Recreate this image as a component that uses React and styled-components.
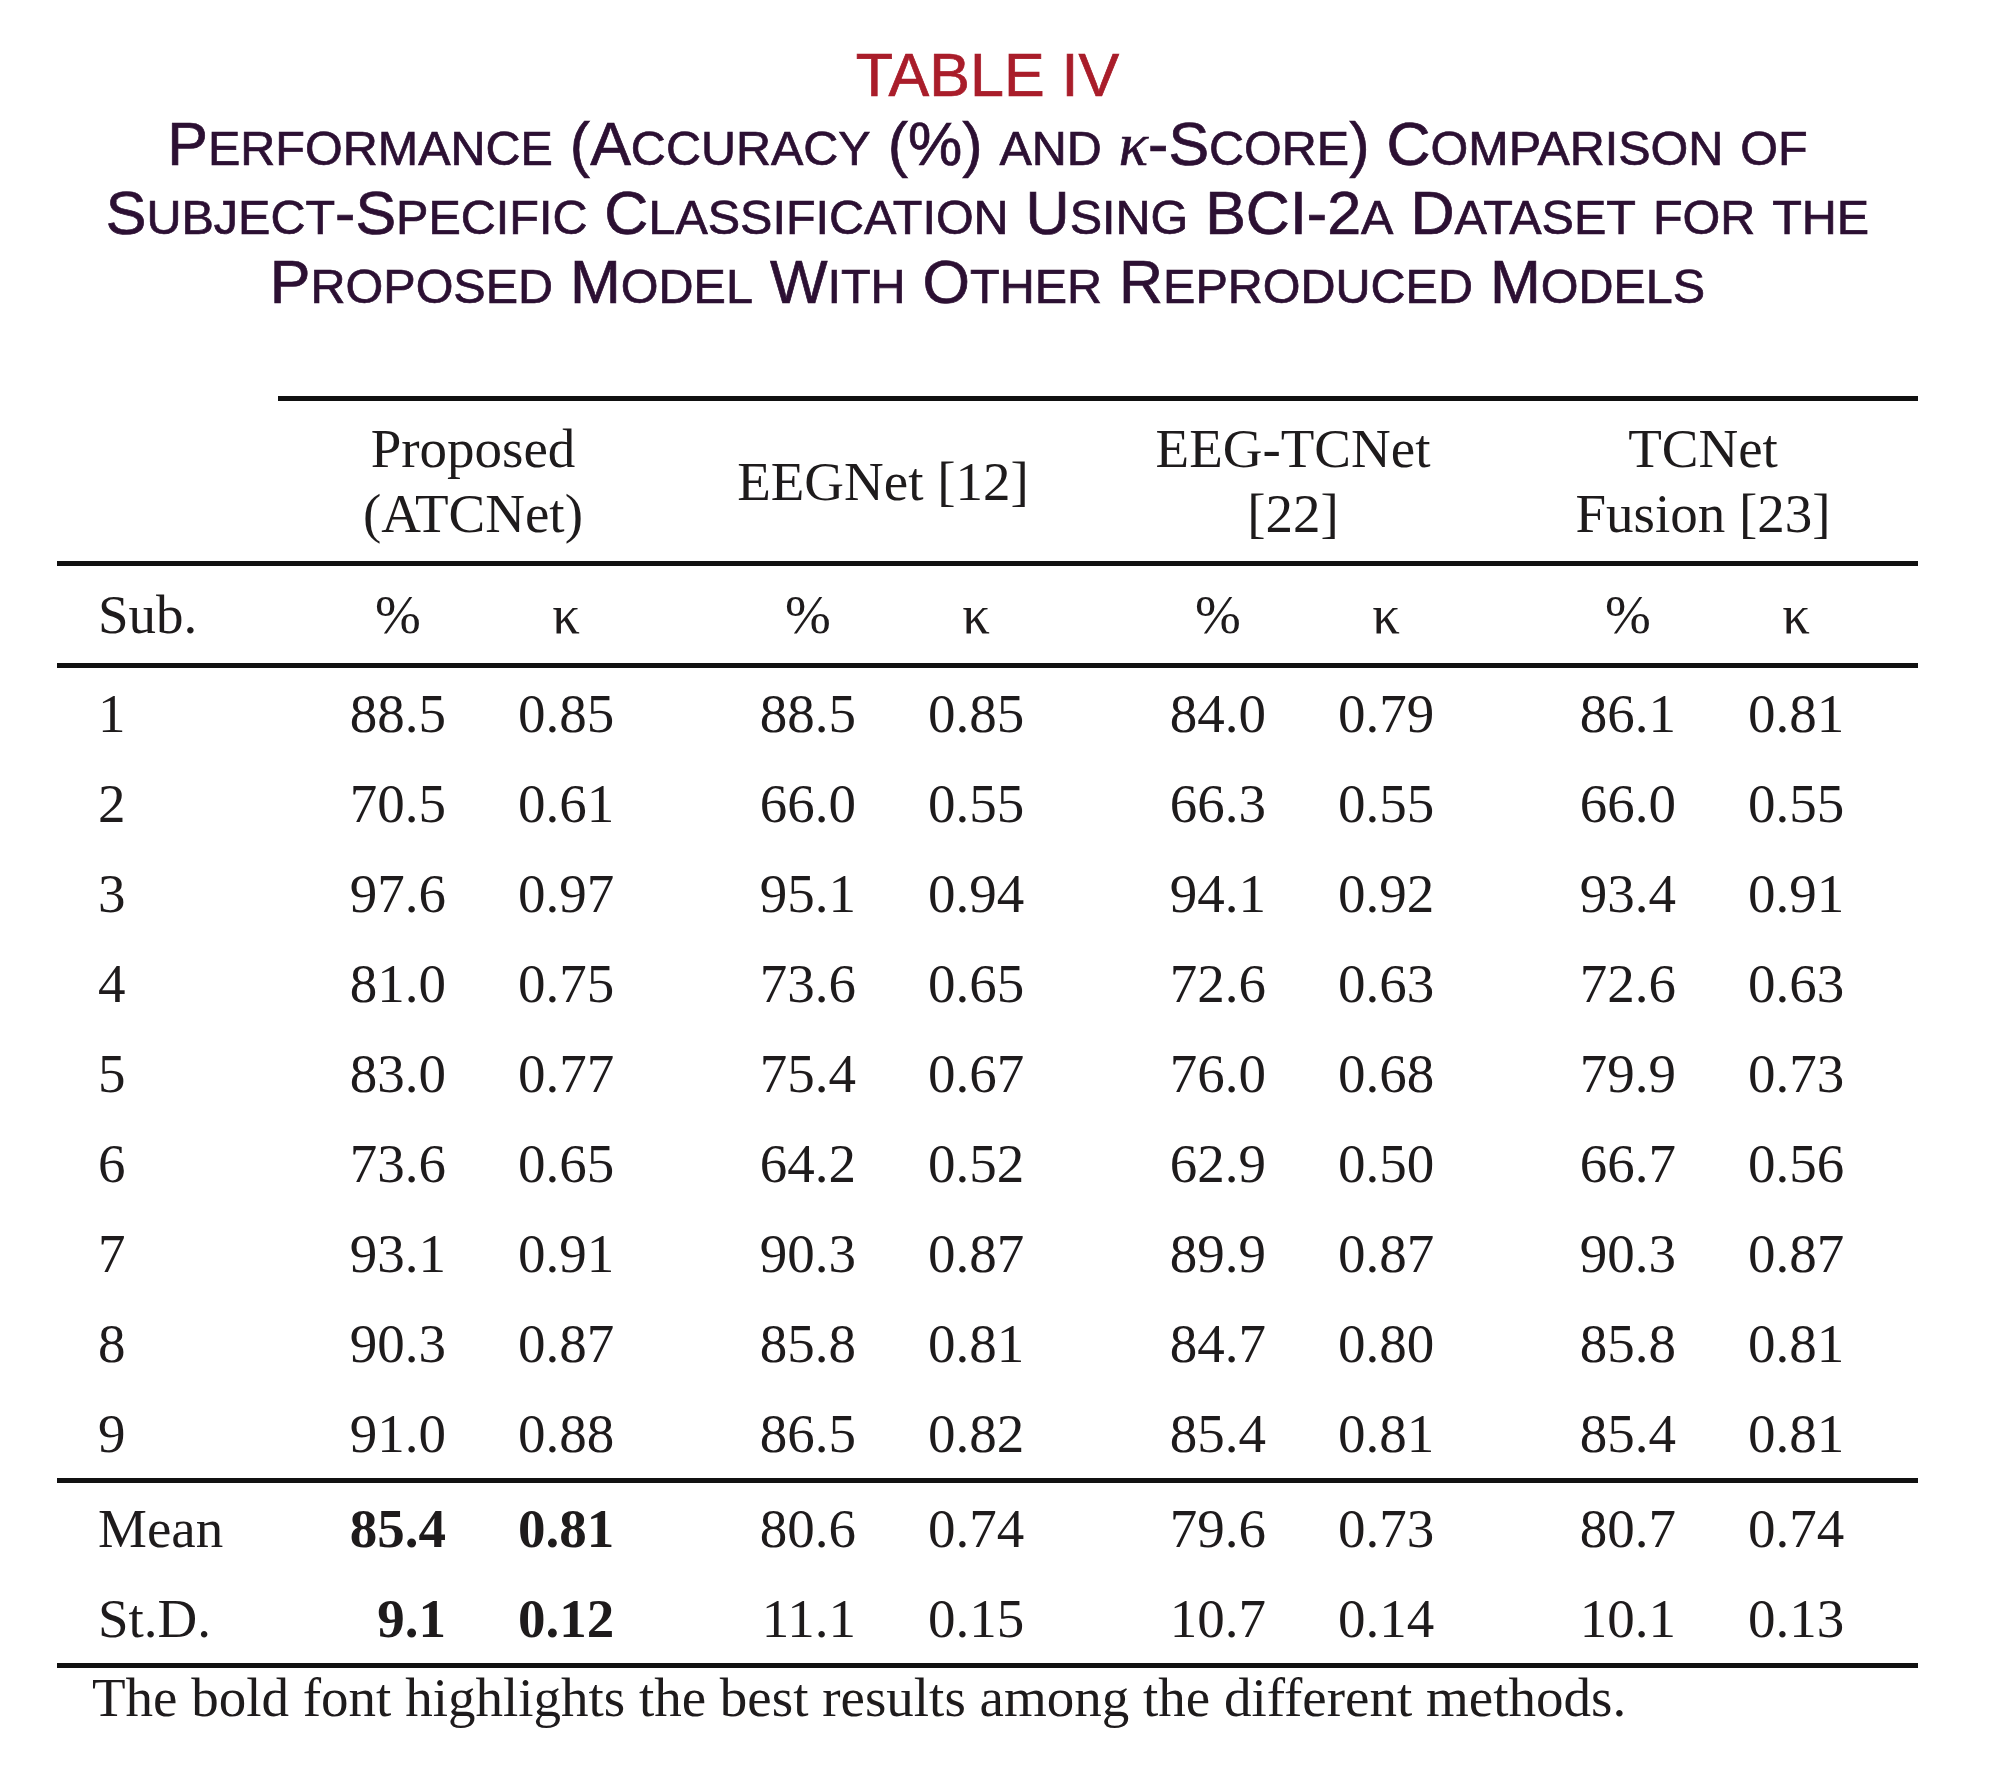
import React from 'react';
import styled, { createGlobalStyle } from 'styled-components';

const GlobalStyle = createGlobalStyle`
  html, body {
    margin: 0;
    padding: 0;
    background: #fff;
  }
`;

const Page = styled.div`
  box-sizing: border-box;
  width: 2000px;
  height: 1783px;
  overflow: hidden;
  padding: 41px 0 0 57px;
  background: #fff;
`;

const Sheet = styled.div`
  width: 1861px;
`;

// caption (IEEE style small caps)
const Caption = styled.div`
  font-family: "Liberation Sans", Arial, sans-serif;
  font-size: 61px;
  text-align: center;
  color: #2c1033;
  -webkit-text-stroke: 0.7px currentColor;
`;

const CaptionLine = styled.div`
  height: 69px;
  line-height: 69px;
  white-space: nowrap;
`;

const TableNo = styled(CaptionLine)`
  color: #a91d2a;
`;

const Small = styled.span`
  font-size: 48.5px;
  line-height: 1;
`;

const Kappa = styled.span`
  font-family: "Liberation Serif", "Times New Roman", serif;
  font-style: italic;
  line-height: 1;
`;

const SmallCaps = ({ text }) =>
  text.match(/[a-z]+|[^a-z]+/g).map((part, i) =>
    /[a-z]/.test(part) ? <Small key={i}>{part.toUpperCase()}</Small> : <span key={i}>{part}</span>
  );

// table
const Table = styled.div`
  margin-top: 79px;
  font-family: "Liberation Serif", "Times New Roman", serif;
  font-size: 55px;
  color: #1e1b1c;
`;

const Row = styled.div`
  display: grid;
  grid-template-columns: 221px repeat(4, 206px 204px);
  height: ${p => (p.$h ? `${p.$h}px` : 'auto')};
  border-bottom: ${p => (p.$rule ? '5px solid #111' : '0')};
`;

const GroupHead = styled.div`
  grid-column: span 2;
  height: 160px;
  border-top: 5px solid #111;
  padding-right: 20px;
  display: flex;
  align-items: center;
  justify-content: center;
  text-align: center;
  line-height: 65px;
`;

const SubCell = styled.div`
  display: flex;
  align-items: center;
  padding-left: 41px;
  white-space: nowrap;
`;

const PctCell = styled.div`
  display: flex;
  align-items: center;
  justify-content: ${p => (p.$head ? 'center' : 'flex-end')};
  padding: 0 38px 0 72px;
  font-weight: ${p => (p.$bold ? 700 : 400)};
  white-space: nowrap;
`;

const KapCell = styled.div`
  display: flex;
  align-items: center;
  justify-content: ${p => (p.$head ? 'center' : 'flex-start')};
  padding: 0 74px 0 34px;
  font-weight: ${p => (p.$bold ? 700 : 400)};
  white-space: nowrap;
`;

const Note = styled.div`
  font-family: "Liberation Serif", "Times New Roman", serif;
  font-size: 55px;
  line-height: 60px;
  color: #1e1b1c;
  padding-left: 35px;
  white-space: nowrap;
`;

const groups = [
  ['Proposed', '(ATCNet)'],
  ['EEGNet [12]'],
  ['EEG-TCNet', '[22]'],
  ['TCNet', 'Fusion [23]'],
];

const rows = [
  ['1', '88.5', '0.85', '88.5', '0.85', '84.0', '0.79', '86.1', '0.81'],
  ['2', '70.5', '0.61', '66.0', '0.55', '66.3', '0.55', '66.0', '0.55'],
  ['3', '97.6', '0.97', '95.1', '0.94', '94.1', '0.92', '93.4', '0.91'],
  ['4', '81.0', '0.75', '73.6', '0.65', '72.6', '0.63', '72.6', '0.63'],
  ['5', '83.0', '0.77', '75.4', '0.67', '76.0', '0.68', '79.9', '0.73'],
  ['6', '73.6', '0.65', '64.2', '0.52', '62.9', '0.50', '66.7', '0.56'],
  ['7', '93.1', '0.91', '90.3', '0.87', '89.9', '0.87', '90.3', '0.87'],
  ['8', '90.3', '0.87', '85.8', '0.81', '84.7', '0.80', '85.8', '0.81'],
  ['9', '91.0', '0.88', '86.5', '0.82', '85.4', '0.81', '85.4', '0.81'],
];

const summary = [
  ['Mean', '85.4', '0.81', '80.6', '0.74', '79.6', '0.73', '80.7', '0.74'],
  ['St.D.', '9.1', '0.12', '11.1', '0.15', '10.7', '0.14', '10.1', '0.13'],
];

const DataRow = ({ cells, bold, rule }) => (
  <Row $h={90} $rule={rule}>
    <SubCell>{cells[0]}</SubCell>
    {cells.slice(1).map((v, i) =>
      i % 2 === 0 ? (
        <PctCell key={i} $bold={bold && i < 2}>{v}</PctCell>
      ) : (
        <KapCell key={i} $bold={bold && i < 2}>{v}</KapCell>
      )
    )}
  </Row>
);

export default function App() {
  return (
    <>
      <GlobalStyle />
      <Page>
        <Sheet>
          <Caption>
            <TableNo>TABLE IV</TableNo>
            <CaptionLine>
              <SmallCaps text="Performance (Accuracy (%) and " />
              <Kappa>κ</Kappa>
              <SmallCaps text="-Score) Comparison of" />
            </CaptionLine>
            <CaptionLine>
              <SmallCaps text="Subject-Specific Classification Using BCI-2a Dataset for the" />
            </CaptionLine>
            <CaptionLine>
              <SmallCaps text="Proposed Model With Other Reproduced Models" />
            </CaptionLine>
          </Caption>

          <Table>
            <Row $rule>
              <div />
              {groups.map((g, i) => (
                <GroupHead key={i}>
                  <div>
                    {g.map((line, j) => (
                      <div key={j}>{line}</div>
                    ))}
                  </div>
                </GroupHead>
              ))}
            </Row>
            <Row $h={97} $rule>
              <SubCell>Sub.</SubCell>
              {groups.map((_, i) => (
                <React.Fragment key={i}>
                  <PctCell $head>%</PctCell>
                  <KapCell $head>κ</KapCell>
                </React.Fragment>
              ))}
            </Row>
            {rows.map((r, i) => (
              <DataRow key={r[0]} cells={r} rule={i === rows.length - 1} />
            ))}
            {summary.map((r, i) => (
              <DataRow key={r[0]} cells={r} bold rule={i === summary.length - 1} />
            ))}
          </Table>
          <Note>The bold font highlights the best results among the different methods.</Note>
        </Sheet>
      </Page>
    </>
  );
}
